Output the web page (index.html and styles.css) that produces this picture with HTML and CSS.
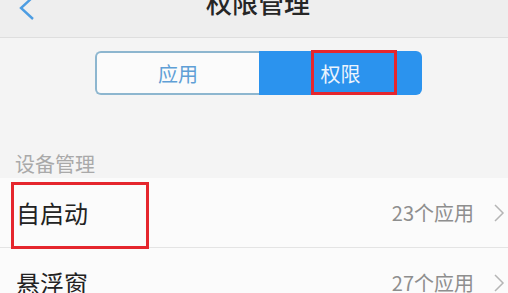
FILE: index.html
```html
<!DOCTYPE html>
<html lang="zh-CN">
<head>
    <meta charset="UTF-8">
    <meta name="viewport" content="width=device-width, initial-scale=1.0">
    <title>权限管理</title>
    <link rel="stylesheet" href="styles.css">
</head>
<body>
    <div class="header">
        <svg class="back" width="18" height="20" viewBox="0 0 18 20">
            <polyline points="15,-3 3,8 15,19" fill="none" stroke="#4d9de2" stroke-width="2.4"/>
        </svg>
        <h1 class="title">权限管理</h1>
        <div></div>
    </div>

    <div class="tabs">
        <div class="tab">应用</div>
        <div class="tab active">权限</div>
        <div class="mark mark-tab"></div>
    </div>

    <div class="section-label">设备管理</div>

    <div class="list">
        <div class="row">
            <span class="name">自启动</span>
            <span class="count">23个应用</span>
            <svg class="arrow" width="12" height="18" viewBox="0 0 12 18">
                <polyline points="2,1 10,9 2,17" fill="none" stroke="#b5b5b5" stroke-width="1.5"/>
            </svg>
            <div class="mark mark-row"></div>
        </div>
        <div class="row">
            <span class="name">悬浮窗</span>
            <span class="count">27个应用</span>
            <svg class="arrow" width="12" height="18" viewBox="0 0 12 18">
                <polyline points="2,1 10,9 2,17" fill="none" stroke="#b5b5b5" stroke-width="1.5"/>
            </svg>
        </div>
    </div>
</body>
</html>
```

FILE: styles.css
```css
body {
    margin: 0;
    width: 508px;
    height: 293px;
    overflow: hidden;
    background-color: #f4f4f4;
    font-family: "Noto Sans CJK SC", "Noto Sans", sans-serif;
}

.header {
    display: grid;
    grid-template-columns: 1fr auto 1fr;
    height: 37px;
    background-color: #eeeeee;
    border-bottom: 1px solid #dedede;
    overflow: hidden;
}

.back {
    margin-left: 18px;
    overflow: visible;
}

.title {
    margin: -13px 0 0 8px;
    font-size: 26px;
    line-height: 30px;
    font-weight: 500;
    color: #262626;
}

.tabs {
    position: relative;
    display: flex;
    width: 327px;
    height: 44px;
    margin: 13px 0 0 95px;
}

.tab {
    flex: 1;
    display: flex;
    justify-content: center;
    align-items: center;
    font-size: 20px;
    color: #ecf4fd;
    background-color: #2b93ee;
    border-radius: 0 6px 6px 0;
}

.tab:first-child {
    box-sizing: border-box;
    flex: 0 0 164px;
    padding-left: 0;
    color: #5f9fd6;
    background-color: #fbfbfb;
    border: 2px solid #8db6cf;
    border-right: none;
    border-radius: 6px 0 0 6px;
}

.mark {
    position: absolute;
    box-sizing: border-box;
    border: 3px solid #e5262d;
}

.mark-tab {
    left: 216px;
    top: -1px;
    width: 86px;
    height: 45px;
}

.section-label {
    margin: 55px 0 0 15px;
    font-size: 20px;
    line-height: 28px;
    color: #a9a9a9;
}

.list {
    background-color: #fbfbfb;
}

.row {
    position: relative;
    display: flex;
    align-items: center;
    height: 69px;
    padding: 0 3px 0 16px;
    border-bottom: 1px solid #e4e4e4;
}

.name {
    flex: 1;
    font-size: 24px;
    color: #222222;
}

.count {
    font-size: 20px;
    color: #8e8e8e;
    margin-right: 19px;
}

.mark-row {
    left: 11px;
    top: 4px;
    width: 138px;
    height: 67px;
}
```
